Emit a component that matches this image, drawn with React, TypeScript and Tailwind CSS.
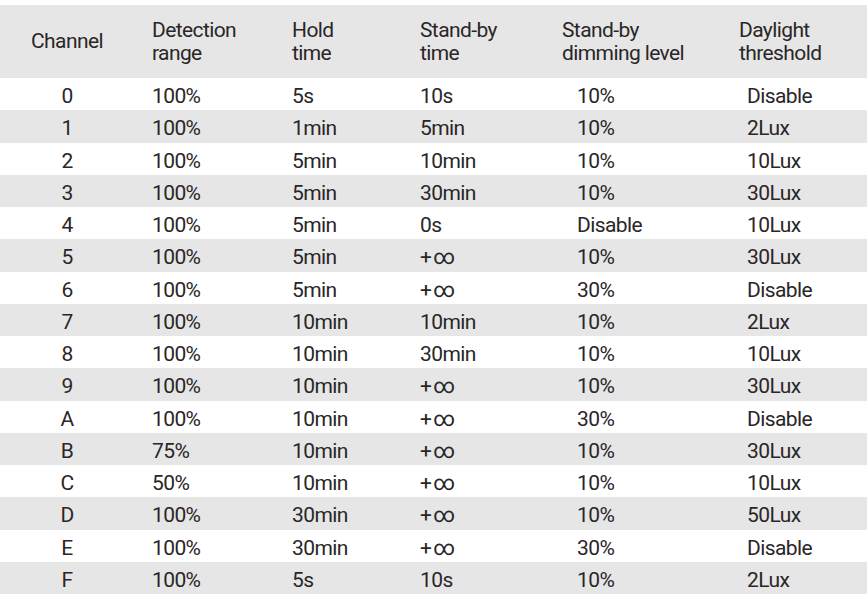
import React from 'react';

const rows: string[][] = [
  ['0', '100%', '5s', '10s', '10%', 'Disable'],
  ['1', '100%', '1min', '5min', '10%', '2Lux'],
  ['2', '100%', '5min', '10min', '10%', '10Lux'],
  ['3', '100%', '5min', '30min', '10%', '30Lux'],
  ['4', '100%', '5min', '0s', 'Disable', '10Lux'],
  ['5', '100%', '5min', '+∞', '10%', '30Lux'],
  ['6', '100%', '5min', '+∞', '30%', 'Disable'],
  ['7', '100%', '10min', '10min', '10%', '2Lux'],
  ['8', '100%', '10min', '30min', '10%', '10Lux'],
  ['9', '100%', '10min', '+∞', '10%', '30Lux'],
  ['A', '100%', '10min', '+∞', '30%', 'Disable'],
  ['B', '75%', '10min', '+∞', '10%', '30Lux'],
  ['C', '50%', '10min', '+∞', '10%', '10Lux'],
  ['D', '100%', '30min', '+∞', '10%', '50Lux'],
  ['E', '100%', '30min', '+∞', '30%', 'Disable'],
  ['F', '100%', '5s', '10s', '10%', '2Lux'],
];

const grid = 'grid grid-cols-[152px_140px_128px_142px_177px_1fr]';

// the "+∞" cells get a little air between the two glyphs, as in the print
const Cell = ({ v }: { v: string }) =>
  v === '+∞' ? (
    <span>
      +<span className="ml-[2px]">∞</span>
    </span>
  ) : (
    <>{v}</>
  );

export default function App() {
  return (
    <div
      className="w-[867px] h-[601px] bg-white pt-[5px] text-[#2a2627] text-[21px] tracking-[-0.6px]"
      style={{ fontFamily: 'Roboto, "Liberation Sans", sans-serif' }}
    >
      {/* header */}
      <div className={`${grid} h-[73px] items-center bg-[#e6e6e6] leading-[23px]`}>
        <div className="w-[134px] text-center">Channel</div>
        <div>Detection<br />range</div>
        <div>Hold<br />time</div>
        <div>Stand-by<br />time</div>
        <div>Stand-by<br />dimming level</div>
        <div>Daylight<br />threshold</div>
      </div>

      {rows.map((r, i) => (
        <div
          key={r[0]}
          className={`${grid} h-[32.25px] items-center pt-[5px] leading-none ${i % 2 === 1 ? 'bg-[#e6e6e6]' : 'bg-white'}`}
        >
          <div className="w-[134px] text-center">{r[0]}</div>
          <div>{r[1]}</div>
          <div>{r[2]}</div>
          <div><Cell v={r[3]} /></div>
          <div className="pl-[15px]">{r[4]}</div>
          <div className="pl-[8px]">{r[5]}</div>
        </div>
      ))}
    </div>
  );
}
